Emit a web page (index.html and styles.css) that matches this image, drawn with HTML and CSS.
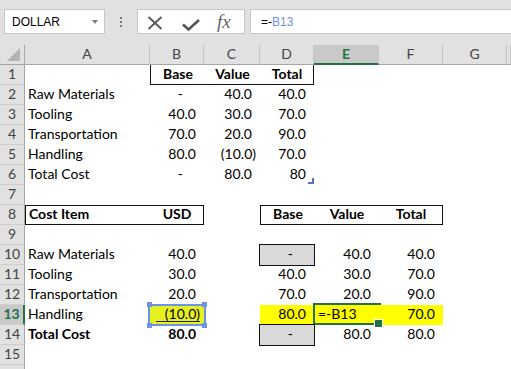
FILE: index.html
```html
<!DOCTYPE html>
<html lang="en">
<head>
	<meta charset="utf-8">
	<title>Cost Sheet</title>
	<link rel="stylesheet" href="styles.css">
</head>
<body>
	<div class="toolbar">
		<div class="namebox"><span>DOLLAR</span><span class="caret"></span></div>
		<div class="grip"><i></i><i></i><i></i></div>
		<div class="fxbtns">
			<svg class="icon-x" width="16" height="14" viewBox="0 0 16 14"><path d="M1.5 1L14.5 13M14.5 1L1.5 13" stroke="#555" stroke-width="1.8" fill="none"/></svg>
			<svg class="icon-ok" width="18" height="12" viewBox="0 0 18 12"><path d="M1 5.5L6.5 10.5L17 1" stroke="#555" stroke-width="2.6" fill="none"/></svg>
			<span class="fx">fx</span>
		</div>
		<div class="formula">=-<span class="ref-text">B13</span></div>
	</div>

	<div class="sheet">
		<div class="row">
			<div class="corner"><svg width="13" height="13" viewBox="0 0 13 13"><polygon points="13,0 13,13 0,13" fill="#b4b4b4"/></svg></div>
			<div class="ch">A</div><div class="ch">B</div><div class="ch">C</div><div class="ch">D</div>
			<div class="ch sel">E</div><div class="ch">F</div><div class="ch">G</div><div class="ch"></div>
		</div>

		<div class="row">
			<div class="rh">1</div><div class="c"></div>
			<div class="c ctr b bl bb">Base</div><div class="c ctr b bb">Value</div><div class="c ctr b bb br">Total</div>
		</div>
		<div class="row">
			<div class="rh">2</div><div class="c">Raw Materials</div>
			<div class="c z">-</div><div class="c n">40.0</div><div class="c n">40.0</div>
		</div>
		<div class="row">
			<div class="rh">3</div><div class="c">Tooling</div>
			<div class="c n">40.0</div><div class="c n">30.0</div><div class="c n">70.0</div>
		</div>
		<div class="row">
			<div class="rh">4</div><div class="c">Transportation</div>
			<div class="c n">70.0</div><div class="c n">20.0</div><div class="c n">90.0</div>
		</div>
		<div class="row">
			<div class="rh">5</div><div class="c">Handling</div>
			<div class="c n">80.0</div><div class="c n neg">(10.0)</div><div class="c n">70.0</div>
		</div>
		<div class="row">
			<div class="rh">6</div><div class="c">Total Cost</div>
			<div class="c z">-</div><div class="c n">80.0</div><div class="c n mark">80</div>
		</div>
		<div class="row">
			<div class="rh">7</div>
		</div>
		<div class="row">
			<div class="rh">8</div>
			<div class="c b bt bb bl">Cost Item</div><div class="c ctr b bt bb br">USD</div><div class="c"></div>
			<div class="c ctr b bt bb bl">Base</div><div class="c ctr b bt bb">Value</div><div class="c ctr b bt bb br">Total</div>
		</div>
		<div class="row">
			<div class="rh">9</div>
		</div>
		<div class="row">
			<div class="rh">10</div><div class="c">Raw Materials</div>
			<div class="c n">40.0</div><div class="c"></div>
			<div class="c z box">-</div><div class="c n">40.0</div><div class="c n">40.0</div>
		</div>
		<div class="row">
			<div class="rh">11</div><div class="c">Tooling</div>
			<div class="c n">30.0</div><div class="c"></div>
			<div class="c n">40.0</div><div class="c n">30.0</div><div class="c n">70.0</div>
		</div>
		<div class="row">
			<div class="rh">12</div><div class="c">Transportation</div>
			<div class="c n">20.0</div><div class="c"></div>
			<div class="c n">70.0</div><div class="c n">20.0</div><div class="c n">90.0</div>
		</div>
		<div class="row">
			<div class="rh sel">13</div><div class="c">Handling</div>
			<div class="c n neg picked"><span class="acct">(10.0)</span><i class="hd h1"></i><i class="hd h2"></i><i class="hd h3"></i><i class="hd h4"></i></div>
			<div class="c"></div>
			<div class="c n hl">80.0</div><div class="c hl active">=-B13</div><div class="c n hl">70.0</div>
		</div>
		<div class="row">
			<div class="rh">14</div><div class="c b">Total Cost</div>
			<div class="c n b">80.0</div><div class="c"></div>
			<div class="c z box">-</div><div class="c n">80.0</div><div class="c n">80.0</div>
		</div>
		<div class="row">
			<div class="rh">15</div>
		</div>
		<div class="row">
			<div class="rh"></div>
		</div>
	</div>
</body>
</html>
```

FILE: styles.css
```css
* {
	box-sizing: border-box;
}

body {
	margin: 0;
	background-color: #fff;
	font-family: Lato, 'Liberation Sans', sans-serif;
	font-size: 14px;
	color: #000;
	overflow: hidden;
}

/* formula bar */
.toolbar {
	display: flex;
	align-items: flex-start;
	height: 45px;
	padding-top: 9px;
	background-color: #e1e1e1;
}

.namebox {
	display: flex;
	align-items: center;
	justify-content: space-between;
	width: 101px;
	height: 25px;
	margin-left: 4px;
	padding: 1px 6px 0 7px;
	background-color: #fff;
	border: 1px solid #c6c6c6;
	font: 12px 'Liberation Sans', Arial, sans-serif;
	color: #000;
}

.caret {
	border-left: 3.5px solid transparent;
	border-right: 3.5px solid transparent;
	border-top: 4px solid #7a7a7a;
}

.grip {
	display: flex;
	flex-direction: column;
	gap: 2px;
	margin: 8px 0 0 15px;
}

.grip i {
	width: 2px;
	height: 2px;
	background-color: #777;
}

.fxbtns {
	display: flex;
	align-items: flex-start;
	width: 108px;
	height: 25px;
	margin-left: 15px;
	padding-left: 9px;
	background-color: #fff;
	border: 1px solid #c6c6c6;
}

.icon-x {
	margin-top: 6px;
}

.icon-ok {
	margin: 9px 0 0 19px;
}

.fx {
	margin: 1px 0 0 17px;
	font: italic 19px/21px 'Liberation Serif', serif;
	color: #666;
}

.formula {
	flex: 1;
	height: 25px;
	margin-left: 5px;
	padding: 1px 0 0 10px;
	background-color: #fff;
	border: 1px solid #c6c6c6;
	border-right: none;
	font: 12px/22px 'Liberation Sans', Arial, sans-serif;
	color: #000;
}

.ref-text {
	color: #6b8fea;
}

/* grid */
.row {
	display: grid;
	grid-template-columns: 25px 125px 54px 56px 54px 65px 64px 64px 1fr;
	height: 20px;
}

.corner {
	display: flex;
	align-items: flex-end;
	justify-content: flex-end;
	padding: 0 4px 3px 0;
	background-color: #e1e1e1;
	border-right: 1px solid #a6a6a6;
	border-bottom: 1px solid #a6a6a6;
}

.ch {
	background-color: #e1e1e1;
	border-right: 1px solid #c4c4c4;
	border-bottom: 1px solid #a6a6a6;
	text-align: center;
	line-height: 17px;
	color: #444;
}

.ch.sel {
	background-color: #c9c9c9;
	border-bottom: 2px solid #217346;
	color: #217346;
	font-weight: bold;
}

.rh {
	background-color: #e1e1e1;
	border-right: 1px solid #a6a6a6;
	border-bottom: 1px solid #cfcfcf;
	text-align: center;
	line-height: 18px;
	color: #444;
}

.rh.sel {
	background-color: #c9c9c9;
	border-right: 2px solid #217346;
	color: #217346;
	font-weight: bold;
}

.c {
	position: relative;
	padding: 0 2px 0 3px;
	line-height: 18px;
	white-space: nowrap;
}

.n {
	text-align: right;
	padding-right: 8px;
}

.neg {
	padding-right: 4px;
}

.z {
	text-align: right;
	padding-right: 21px;
}

.ctr {
	text-align: center;
}

.b {
	font-weight: bold;
}

.bt {
	border-top: 1px solid #111;
	line-height: 16px;
}

.bb {
	border-bottom: 1px solid #111;
}

.bl {
	border-left: 1px solid #111;
}

.br {
	border-right: 1px solid #111;
}

.box {
	background-color: #d9d9d9;
	box-shadow: 0 0 0 1px #111;
}

.hl {
	background-color: #ffff00;
}

/* small paste marker under D6 */
.mark::after {
	content: '';
	position: absolute;
	right: 0;
	bottom: 1px;
	width: 4px;
	height: 4px;
	border-right: 2px solid #5b6ed0;
	border-bottom: 2px solid #5b6ed0;
}

/* B13: cell referenced by the formula */
.picked {
	background-color: #e6f01f;
}

.picked::after {
	content: '';
	position: absolute;
	left: -2px;
	top: -1px;
	right: -2px;
	bottom: -1px;
	border: 2px solid #6b93ea;
}

.acct {
	display: inline-block;
	width: 44px;
	line-height: 14px;
	border-bottom: 1px solid #222;
}

.hd {
	position: absolute;
	z-index: 1;
	width: 5px;
	height: 5px;
	background-color: #6b93ea;
}

.h1 { left: -3px; top: -3px; }
.h2 { right: -3px; top: -3px; }
.h3 { left: -3px; bottom: -3px; }
.h4 { right: -3px; bottom: -3px; }

/* E13: active cell in edit mode */
.active {
	padding-left: 4px;
}

.active::after {
	content: '';
	position: absolute;
	left: -1px;
	top: -2px;
	right: -2px;
	bottom: 0;
	border: 2px solid #217346;
}

.active::before {
	content: '';
	position: absolute;
	z-index: 1;
	right: -4px;
	bottom: -3px;
	width: 7px;
	height: 7px;
	background-color: #217346;
	border: 1px solid #fff;
}
```
